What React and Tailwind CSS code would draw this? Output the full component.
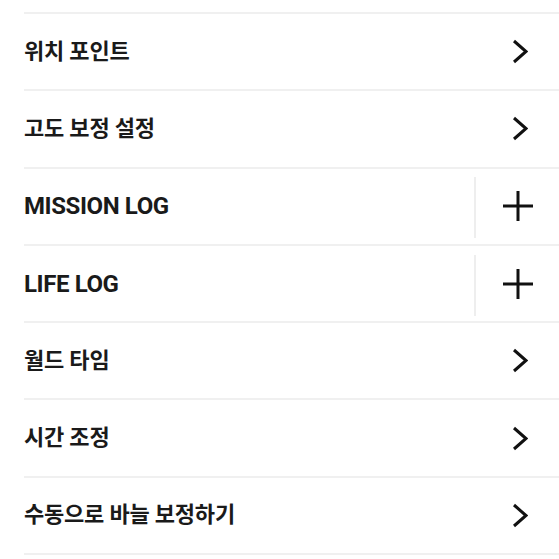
import React from "react";

const items = [
  { label: "위치 포인트", type: "chev" },
  { label: "고도 보정 설정", type: "chev" },
  { label: "MISSION LOG", type: "plus", latin: true },
  { label: "LIFE LOG", type: "plus", latin: true },
  { label: "월드 타임", type: "chev" },
  { label: "시간 조정", type: "chev" },
  { label: "수동으로 바늘 보정하기", type: "chev" },
];

function Chevron() {
  return (
    <svg width="16" height="25" viewBox="0 0 16 25" className="mr-[31px]">
      <polyline points="2,2 14,12.5 2,23" fill="none" stroke="#111" strokeWidth="3" strokeLinecap="butt" strokeLinejoin="miter" />
    </svg>
  );
}

function Plus() {
  return (
    <div className="flex items-center h-full">
      <div className="w-[2px] h-[61px] bg-[#eeeeee] mt-[3px]" />
      <svg width="30" height="30" viewBox="0 0 30 30" className="ml-[27px] mr-[26px]">
        <path d="M15 0V30M0 15H30" stroke="#111" strokeWidth="3" fill="none" />
      </svg>
    </div>
  );
}

export default function App() {
  return (
    <div
      className="w-[559px] h-[559px] overflow-hidden bg-white text-[#1a1a1a]"
      style={{ fontFamily: 'Roboto, "Noto Sans CJK KR", sans-serif' }}
    >
      <div className="ml-6 h-[14px] border-b-2 border-[#f0f0f0]" />
      {items.map((it) => (
        <div
          key={it.label}
          className="ml-6 h-[77.3px] border-b-2 border-[#f0f0f0] flex items-center justify-between"
        >
          {it.latin ? (
            <span className="text-[24px] font-bold leading-none tracking-[-0.4px]">{it.label}</span>
          ) : (
            <span className="text-[22px] font-bold leading-none tracking-[-0.2px]">{it.label}</span>
          )}
          {it.type === "chev" ? <Chevron /> : <Plus />}
        </div>
      ))}
    </div>
  );
}
